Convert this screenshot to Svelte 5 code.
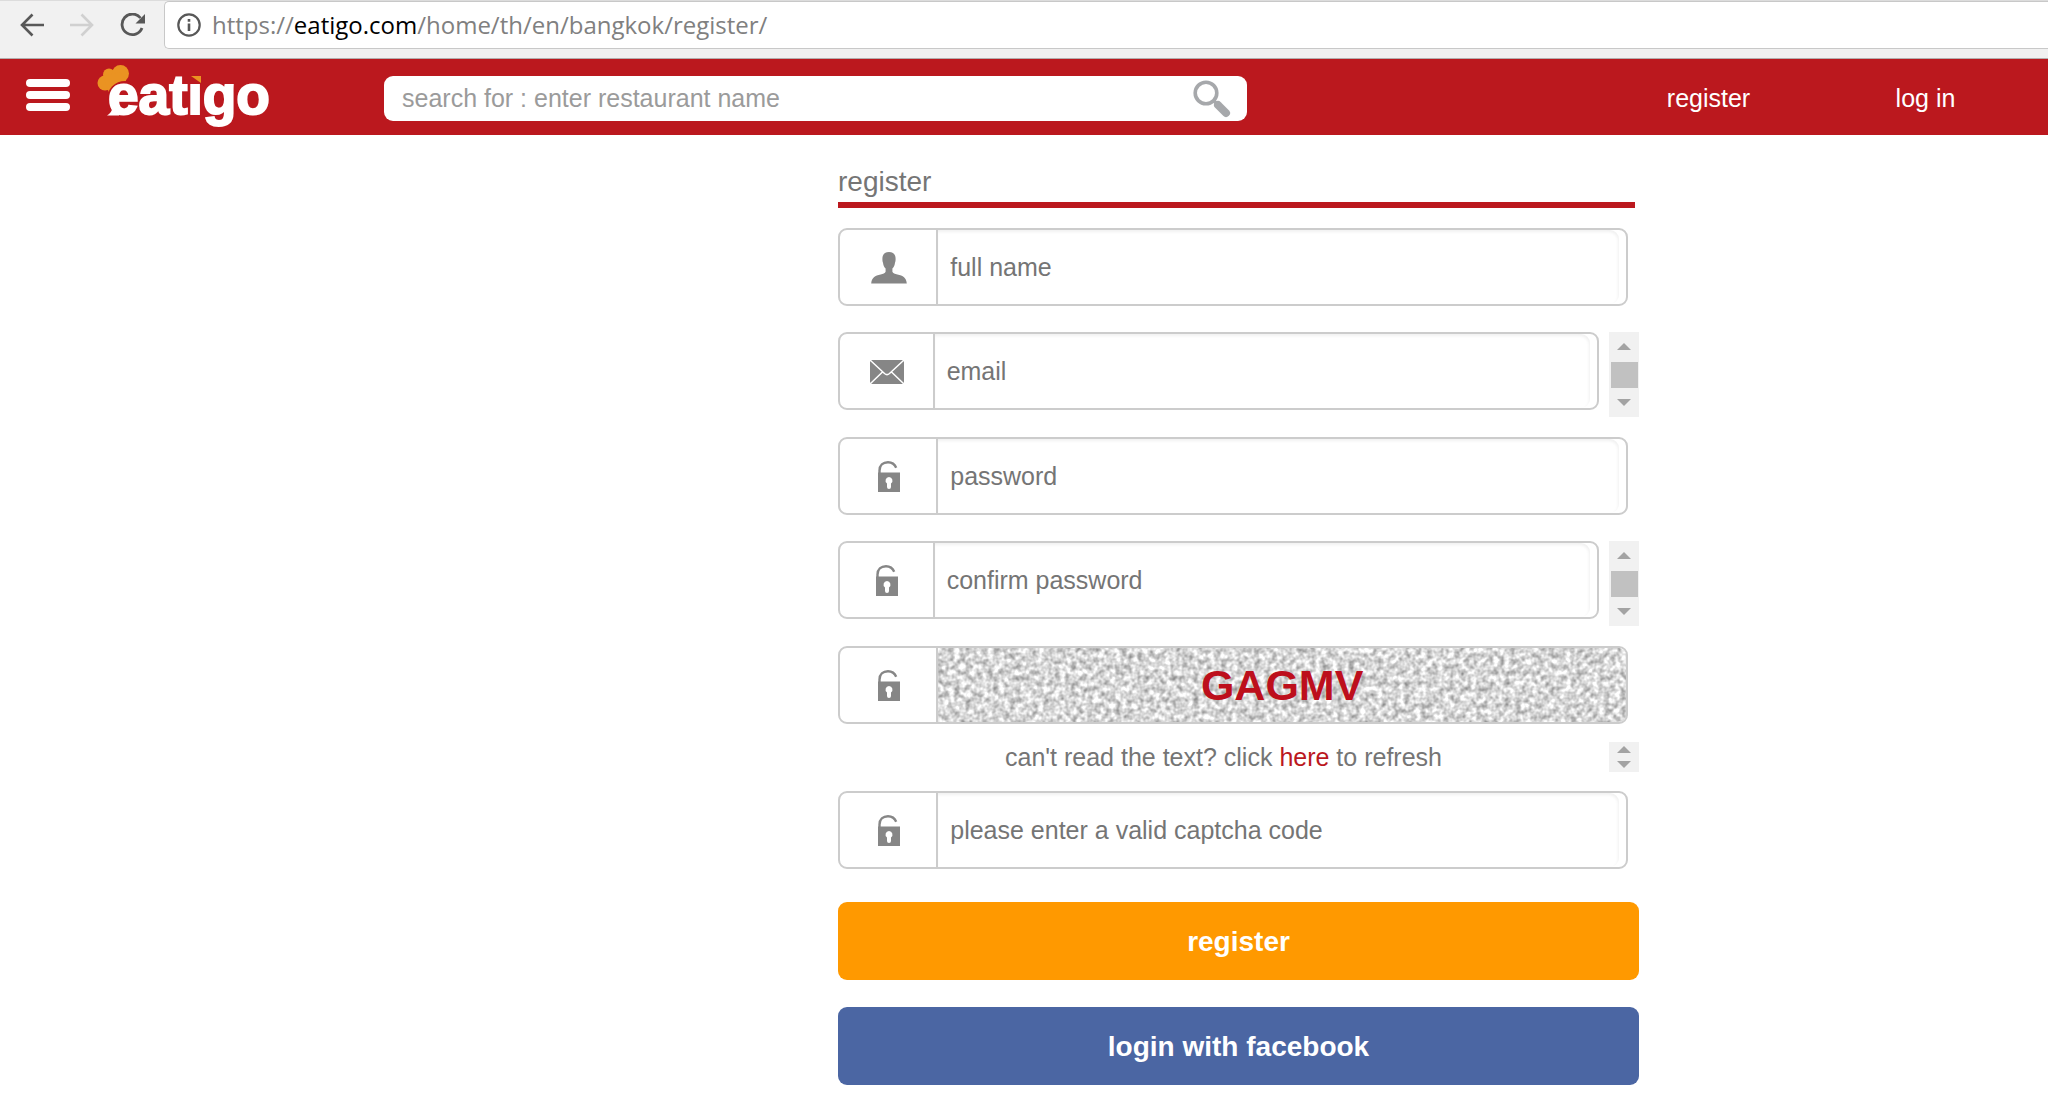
<script lang="ts">
	type Field = {
		id: string;
		type: string;
		placeholder: string;
		icon: 'user' | 'mail' | 'lock';
		scrolls: boolean;
	};

	const fields: Field[] = [
		{ id: 'fullname', type: 'text', placeholder: 'full name', icon: 'user', scrolls: false },
		{ id: 'email', type: 'email', placeholder: 'email', icon: 'mail', scrolls: true },
		{ id: 'password', type: 'password', placeholder: 'password', icon: 'lock', scrolls: false },
		{ id: 'confirm', type: 'password', placeholder: 'confirm password', icon: 'lock', scrolls: true }
	];

	const codes = ['GAGMV', 'TRKWB', 'HQZNE'];

	let values: Record<string, string> = $state({ fullname: '', email: '', password: '', confirm: '' });
	let captcha = $state('');
	let search = $state('');
	let codeIndex = $state(0);

	// Show the next captcha code
	const refreshCode = (event: MouseEvent) => {
		event.preventDefault();
		codeIndex = (codeIndex + 1) % codes.length;
		captcha = '';
	};

	const handleSubmit = (event: SubmitEvent) => {
		event.preventDefault();
	};
</script>

{#snippet fieldIcon(name: string)}
	{#if name === 'user'}
		<svg width="36" height="32" viewBox="0 0 36 32" aria-hidden="true">
			<path
				fill="#868686"
				d="M18 0c4.400 0 6.800 2.800 6.600 7.200c0 1.600-.2 2.600-.6 3.600c-.4 3-1.200 4.600-2.600 5.800v3.200c.6 1.600 2.400 2 5 2.600c5.600 1.200 9 3 9.400 9.200H.2c.4-6.200 3.800-8 9.400-9.200c2.600-.6 4.400-1 5-2.600v-3.200c-1.400-1.200-2.200-2.800-2.600-5.800c-.4-1-.6-2-.6-3.600C11.200 2.800 13.600 0 18 0z"
			/>
		</svg>
	{:else if name === 'mail'}
		<svg width="36" height="26" viewBox="0 0 36 26" aria-hidden="true">
			<rect x="1" y="1" width="34" height="24" rx="2" fill="#868686" />
			<path d="M1 1l14.500 13.500q2.500 2.200 5 0L35 1M1 25l12.500-12M35 25L22.500 13" fill="none" stroke="#fff" stroke-width="1.500" />
		</svg>
	{:else}
		<svg width="24" height="32" viewBox="0 0 24 32" aria-hidden="true">
			<path d="M2.500 12V9.500C2.500 4.500 6 1.200 11 1.200c4 0 6.700 2 8.200 5.600" fill="none" stroke="#868686" stroke-width="2.400" />
			<path
				fill="#868686"
				fill-rule="evenodd"
				d="M1 11.500h22V31H1zM12 16a3.600 3.600 0 0 0-2 6.500v3.500a2 2 0 0 0 4 0v-3.500a3.600 3.600 0 0 0-2-6.500z"
			/>
		</svg>
	{/if}
{/snippet}

{#snippet scroller(small: boolean)}
	<div class="scroller" class:small>
		<button type="button" aria-label="Scroll up">
			<svg width="14" height="7" viewBox="0 0 14 7"><path d="M0 7l7-7 7 7z" fill="#a3a3a3" /></svg>
		</button>
		{#if !small}
			<div class="thumb"></div>
		{/if}
		<button type="button" aria-label="Scroll down">
			<svg width="14" height="7" viewBox="0 0 14 7"><path d="M0 0l7 7 7-7z" fill="#a3a3a3" /></svg>
		</button>
	</div>
{/snippet}

<!-- Browser toolbar -->
<div class="toolbar">
	<button type="button" aria-label="Back">
		<svg width="24" height="24" viewBox="0 0 24 24" fill="none" stroke="#585858" stroke-width="2.600">
			<path d="M24 12H2M12.500 1.500L2 12l10.500 10.500" />
		</svg>
	</button>
	<button type="button" aria-label="Forward" disabled>
		<svg width="24" height="24" viewBox="0 0 24 24" fill="none" stroke="#d0d0d0" stroke-width="2.600">
			<path d="M0 12h22M11.500 1.500L22 12 11.500 22.500" />
		</svg>
	</button>
	<button type="button" aria-label="Reload">
		<svg width="26" height="24" viewBox="0 0 26 24">
			<path d="M20.500 5A10.300 10.300 0 1 0 22 15" fill="none" stroke="#585858" stroke-width="2.800" />
			<path d="M25 1v9.500h-9.500z" fill="#585858" />
		</svg>
	</button>
	<div class="address">
		<svg width="24" height="24" viewBox="0 0 24 24" aria-hidden="true">
			<circle cx="12" cy="12" r="10.700" fill="none" stroke="#585858" stroke-width="2.200" />
			<path d="M12 10.500V18M12 6v2.800" stroke="#585858" stroke-width="2.600" />
		</svg>
		<span class="url">https://<b>eatigo.com</b>/home/th/en/bangkok/register/</span>
	</div>
</div>

<header>
	<div class="brand">
		<button type="button" class="menu" aria-label="Menu">
			<span></span>
			<span></span>
			<span></span>
		</button>
		<a href="/" aria-label="eatigo">
			<svg width="176" height="64" viewBox="0 0 176 64">
				<g fill="#ea9322">
					<circle cx="9" cy="18" r="7.500" />
					<circle cx="13" cy="9.500" r="6" />
					<circle cx="24.500" cy="8.500" r="8.500" />
					<path d="M7 11l17-4 6 8-1 9-16 4z" />
				</g>
				<circle cx="29" cy="34" r="18" fill="#bb181e" />
				<text x="12" y="49" class="wordmark">eatigo</text>
				<path d="M11 50.500q5-3 6-9l8 6-2 3z" fill="#fff" />
				<path d="M92 4h15v14H92z" fill="#bb181e" />
				<path d="M95 11h10v7z" fill="#ea9322" />
			</svg>
		</a>
	</div>
	<div class="search">
		<input type="search" aria-label="search restaurants" placeholder="search for : enter restaurant name" bind:value={search} />
		<button type="button" aria-label="Search">
			<svg width="38" height="38" viewBox="0 0 38 38">
				<circle cx="13" cy="13" r="10.800" fill="none" stroke="#a6a8ab" stroke-width="3.600" />
				<path d="M20 20l4 4" stroke="#a6a8ab" stroke-width="3.500" />
				<path d="M25 25l8 8" stroke="#a6a8ab" stroke-width="8" stroke-linecap="round" />
			</svg>
		</button>
	</div>
	<nav>
		<a href="#register">register</a>
		<a href="#login">log in</a>
	</nav>
</header>

<main>
	<form id="register" onsubmit={handleSubmit}>
		<h1>register</h1>

		{#each fields as field (field.id)}
			<div class="row" class:scrolls={field.scrolls}>
				<div class="field">
					<label for={field.id} aria-label={field.placeholder}>{@render fieldIcon(field.icon)}</label>
					<input id={field.id} type={field.type} placeholder={field.placeholder} bind:value={values[field.id]} />
				</div>
				{#if field.scrolls}
					{@render scroller(false)}
				{/if}
			</div>
		{/each}

		<div class="row captcha">
			<div class="field">
				<label for="captcha" aria-label="captcha">{@render fieldIcon('lock')}</label>
				<div class="code">
					<svg class="noise" width="100%" height="100%" aria-hidden="true">
						<filter id="grain" x="0" y="0" width="100%" height="100%" color-interpolation-filters="sRGB">
							<feTurbulence type="fractalNoise" baseFrequency="0.18" numOctaves="2" seed="4" />
							<feColorMatrix values="0.750 0 0 0 0.470  0.750 0 0 0 0.470  0.750 0 0 0 0.470  0 0 0 0 1" />
						</filter>
						<rect width="100%" height="100%" filter="url(#grain)" />
					</svg>
					<span>{codes[codeIndex]}</span>
				</div>
			</div>
		</div>

		<div class="refresh">
			<p>can't read the text? click <a href="#captcha" onclick={refreshCode}>here</a> to refresh</p>
			{@render scroller(true)}
		</div>

		<div class="row last">
			<div class="field">
				<label for="captcha" aria-label="captcha code">{@render fieldIcon('lock')}</label>
				<input id="captcha" type="text" placeholder="please enter a valid captcha code" bind:value={captcha} />
			</div>
		</div>

		<button type="submit" class="btn">register</button>
		<button type="button" class="btn facebook">login with facebook</button>
	</form>
</main>

<style>
	:global(body) {
		margin: 0;
		background: #fff;
		font-family: 'Liberation Sans', Arial, sans-serif;
		font-size: 25px;
		color: #757575;
	}

	button,
	input {
		font-family: inherit;
		font-size: inherit;
		border: 0;
		padding: 0;
		background: none;
	}

	button {
		cursor: pointer;
	}

	svg {
		display: block;
	}

	a {
		text-decoration: none;
	}

	.toolbar {
		display: flex;
		align-items: flex-start;
		box-sizing: border-box;
		height: 59px;
		padding-left: 20px;
		gap: 26px;
		background: #f1f1f1;
		border-top: 1px solid #dcdcdc;
		border-bottom: 1px solid #b5aeae;
	}

	.toolbar button {
		height: 48px;
	}

	.address {
		flex: 1;
		display: flex;
		align-items: center;
		box-sizing: border-box;
		height: 48px;
		margin-left: -8px;
		padding-left: 12px;
		gap: 11px;
		background: #fff;
		border: 1px solid #c8c8c8;
		border-right: 0;
		border-radius: 5px 0 0 5px;
	}

	.url {
		font-family: 'Open Sans', 'Noto Sans', sans-serif;
		font-size: 24px;
		line-height: 32px;
		color: #808080;
	}

	.url b {
		font-weight: 400;
		color: #000;
	}

	header {
		display: grid;
		grid-template-columns: 384px minmax(0, 863fr) minmax(0, 801fr);
		align-items: center;
		height: 76px;
		background: #bb181e;
	}

	.brand {
		display: flex;
		align-items: center;
		padding-left: 26px;
		gap: 26px;
	}

	.menu {
		display: flex;
		flex-direction: column;
		gap: 4px;
		width: 44px;
		margin-bottom: 4px;
	}

	.menu span {
		height: 8px;
		border-radius: 4px;
		background: #fff;
	}

	.wordmark {
		font-family: 'Liberation Sans', Arial, sans-serif;
		font-size: 55px;
		font-weight: 700;
		fill: #fff;
		stroke: #fff;
		stroke-width: 2;
	}

	.search {
		display: flex;
		align-items: center;
		height: 45px;
		margin-top: 3px;
		padding: 0 16px 0 18px;
		background: #fff;
		border-radius: 9px;
	}

	.search input {
		flex: 1;
		min-width: 0;
		outline: 0;
	}

	.search input::placeholder {
		color: #9b9b9b;
		opacity: 1;
	}

	nav {
		display: flex;
		justify-content: flex-end;
		margin-top: 3px;
		padding-right: 14px;
	}

	nav a {
		width: 217px;
		text-align: center;
		color: #fff;
	}

	main {
		display: grid;
		grid-template-columns: 838fr 801fr 409fr;
		padding: 31px 0 32px;
	}

	form {
		grid-column: 2;
	}

	h1 {
		margin: 0 4px 20px 0;
		padding-bottom: 4px;
		border-bottom: 6px solid #bb181e;
		font-size: 28px;
		font-weight: 400;
		line-height: 32px;
	}

	.row {
		display: flex;
		align-items: flex-start;
		gap: 10px;
		margin-bottom: 26px;
		padding-right: 11px;
	}

	.row.scrolls {
		margin-bottom: 20px;
		padding-right: 0;
	}

	.row.captcha {
		margin-bottom: 18px;
	}

	.row.last {
		margin-bottom: 33px;
	}

	.field {
		flex: 1;
		display: flex;
		box-sizing: border-box;
		min-width: 0;
		height: 78px;
		border: 2px solid #ccc;
		border-radius: 9px;
		overflow: hidden;
	}

	.field label {
		display: flex;
		flex: 0 0 12.5%;
		align-items: center;
		justify-content: center;
		box-sizing: border-box;
		padding: 2px 0 0 1px;
		border-right: 2px solid #ccc;
	}

	.field input {
		flex: 1;
		min-width: 0;
		margin-right: 7px;
		padding-left: 12px;
		border-radius: 0 9px 9px 0;
		box-shadow: inset -1px 2px 3px rgba(0, 0, 0, 0.06);
		outline: 0;
	}

	.field input::placeholder {
		color: #757575;
		opacity: 1;
	}

	.scroller {
		display: flex;
		flex-direction: column;
		width: 30px;
		height: 85px;
		background: #f1f1f1;
	}

	.scroller button {
		flex: 1;
		display: flex;
		align-items: center;
		justify-content: center;
	}

	.scroller.small {
		height: 30px;
	}

	.thumb {
		height: 26px;
		margin: 0 1px 0 2px;
		background: #c1c1c1;
	}

	.code {
		flex: 1;
		display: grid;
		place-items: center;
	}

	.code > * {
		grid-area: 1 / 1;
	}

	.noise {
		min-height: 0;
	}

	.code span {
		z-index: 1;
		font-size: 43px;
		font-weight: 700;
		line-height: 72px;
		color: #bd0f1c;
	}

	.refresh {
		display: flex;
		align-items: center;
		margin-bottom: 19px;
	}

	.refresh p {
		flex: 1;
		margin: 0;
		text-align: center;
		line-height: 30px;
	}

	.refresh a {
		color: #bb181e;
	}

	.btn {
		display: block;
		width: 100%;
		height: 78px;
		padding-top: 2px;
		border-radius: 9px;
		background: #ff9900;
		color: #fff;
		font-size: 28px;
		font-weight: 700;
	}

	.btn.facebook {
		margin-top: 27px;
		background: #4b66a3;
	}
</style>
